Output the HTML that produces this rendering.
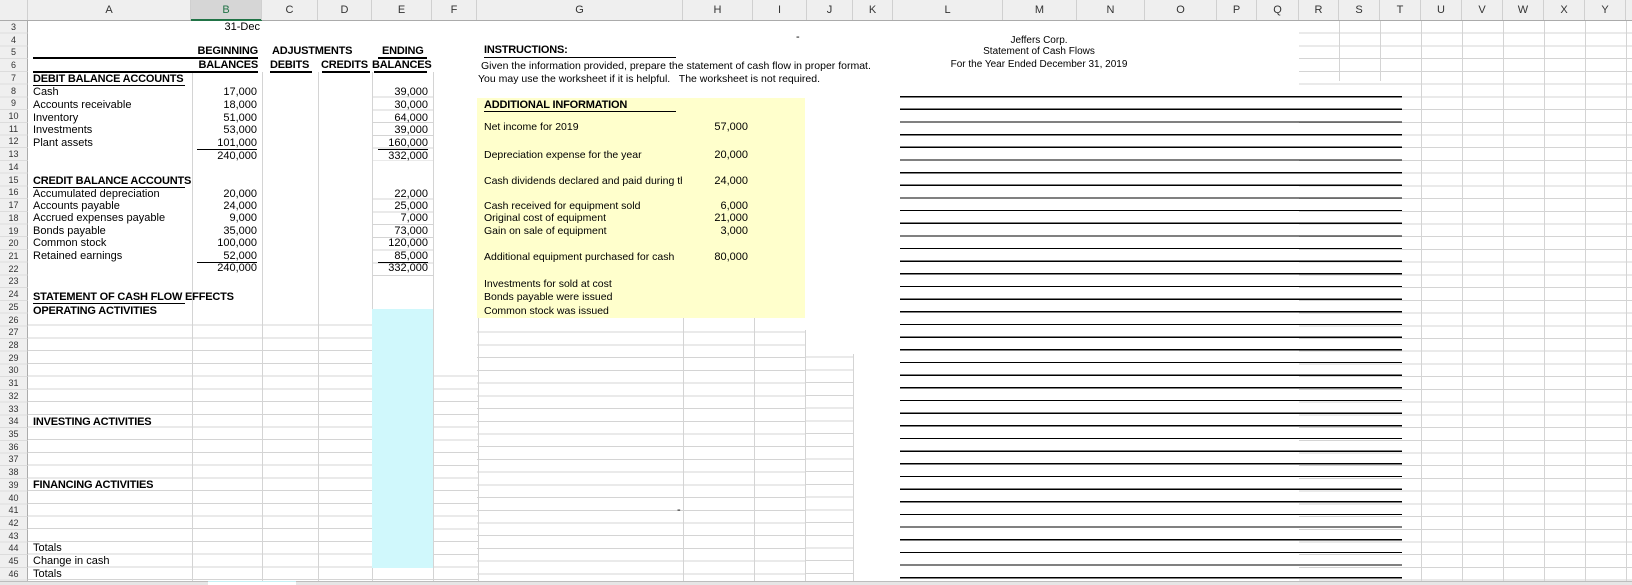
<!DOCTYPE html>
<html><head><meta charset="utf-8"><style>
*{margin:0;padding:0;box-sizing:border-box}
body{width:1632px;height:585px;overflow:hidden;background:#fff;position:relative;font-family:"Liberation Sans",sans-serif;font-size:11px;color:#000}
.a{position:absolute;white-space:nowrap;line-height:12px}
.b{font-weight:bold;font-size:11px;letter-spacing:-0.2px}
.r{text-align:right}
.ul{position:absolute;height:1px;background:#000}
.ch{position:absolute;top:0;height:20px;line-height:20px;text-align:center;font-size:11px;color:#333;border-right:1px solid #d0d0d0}
.vl{position:absolute;width:1px;background:#d4d4d4}
.hg{position:absolute;background-image:repeating-linear-gradient(to bottom,transparent 0,transparent 11.72px,#d4d4d4 11.72px,#d4d4d4 12.72px)}
</style></head><body>
<div style="position:absolute;left:0;top:0;width:1632px;height:21px;background:#efefef;border-bottom:1px solid #ababab"></div>
<div style="position:absolute;left:191px;top:0;width:71px;height:21px;background:#d6d6d6;border-bottom:2px solid #217346"></div>
<div class="ch" style="left:0;width:28px"></div>
<div class="ch" style="left:28px;width:163px">A</div>
<div class="ch" style="left:191px;width:71px;color:#217346">B</div>
<div class="ch" style="left:262px;width:56px">C</div>
<div class="ch" style="left:318px;width:54px">D</div>
<div class="ch" style="left:372px;width:60px">E</div>
<div class="ch" style="left:432px;width:45px">F</div>
<div class="ch" style="left:477px;width:206px">G</div>
<div class="ch" style="left:683px;width:70px">H</div>
<div class="ch" style="left:753px;width:54px">I</div>
<div class="ch" style="left:807px;width:46px">J</div>
<div class="ch" style="left:853px;width:40px">K</div>
<div class="ch" style="left:893px;width:110px">L</div>
<div class="ch" style="left:1003px;width:74px">M</div>
<div class="ch" style="left:1077px;width:68px">N</div>
<div class="ch" style="left:1145px;width:72px">O</div>
<div class="ch" style="left:1217px;width:40px">P</div>
<div class="ch" style="left:1257px;width:42px">Q</div>
<div class="ch" style="left:1299px;width:40px">R</div>
<div class="ch" style="left:1339px;width:41px">S</div>
<div class="ch" style="left:1380px;width:41px">T</div>
<div class="ch" style="left:1421px;width:41px">U</div>
<div class="ch" style="left:1462px;width:41px">V</div>
<div class="ch" style="left:1503px;width:41px">W</div>
<div class="ch" style="left:1544px;width:41px">X</div>
<div class="ch" style="left:1585px;width:41px">Y</div>
<div style="position:absolute;left:0;top:21px;width:28px;height:560px;background:#efefef;border-right:1px solid #ababab;font-size:9px;color:#333;text-align:center">
<div style="line-height:12.72px">3<br>4<br>5<br>6<br>7<br>8<br>9<br>10<br>11<br>12<br>13<br>14<br>15<br>16<br>17<br>18<br>19<br>20<br>21<br>22<br>23<br>24<br>25<br>26<br>27<br>28<br>29<br>30<br>31<br>32<br>33<br>34<br>35<br>36<br>37<br>38<br>39<br>40<br>41<br>42<br>43<br>44<br>45<br>46</div></div>
<div class="hg" style="left:0;top:21px;width:28px;height:560px;opacity:.7"></div>

<div class="hg" style="left:1299px;top:21px;width:333px;height:560px"></div>
<div class="vl" style="left:1339px;top:21px;height:60px"></div>
<div class="vl" style="left:1380px;top:21px;height:60px"></div>
<div class="vl" style="left:1421px;top:21px;height:560px"></div>
<div class="vl" style="left:1462px;top:21px;height:560px"></div>
<div class="vl" style="left:1503px;top:21px;height:560px"></div>
<div class="vl" style="left:1544px;top:21px;height:560px"></div>
<div class="vl" style="left:1585px;top:21px;height:560px"></div>
<div class="vl" style="left:1626px;top:21px;height:560px"></div>

<div class="hg" style="left:28px;top:314px;width:406px;height:267px;background-position:0 -1px"></div>
<div class="hg" style="left:434px;top:364px;width:44px;height:217px"></div>
<div class="hg" style="left:477px;top:320px;width:328px;height:261px"></div>
<div class="hg" style="left:805px;top:345px;width:48px;height:236px"></div>
<div class="vl" style="left:192px;top:72px;height:509px"></div>
<div class="vl" style="left:262px;top:72px;height:509px"></div>
<div class="vl" style="left:318px;top:72px;height:509px"></div>
<div class="vl" style="left:372px;top:72px;height:509px"></div>
<div class="vl" style="left:433px;top:72px;height:509px"></div>
<div class="vl" style="left:478px;top:318px;height:263px"></div>
<div class="vl" style="left:683px;top:318px;height:263px"></div>
<div class="vl" style="left:754px;top:318px;height:263px"></div>
<div class="vl" style="left:805px;top:330px;height:251px"></div>
<div class="vl" style="left:853px;top:354px;height:227px"></div>
<div class="hg" style="left:372px;top:85px;width:61px;height:76px;background-position:0 0"></div>
<div class="hg" style="left:372px;top:187px;width:61px;height:89px"></div>

<div style="position:absolute;left:372px;top:309px;width:61px;height:259px;background:#d0f8fc"></div>
<div style="position:absolute;left:477px;top:98px;width:328px;height:220px;background:#ffffcc"></div>

<div style="position:absolute;left:900px;top:96px;width:502px;height:484px;background-image:repeating-linear-gradient(to bottom,#000 0,#000 1.3px,transparent 1.3px,transparent 12.66px)"></div>

<div class="a r" style="left:192px;width:68px;top:21px">31-Dec</div>
<div class="a b r" style="left:150px;width:108px;top:45px">BEGINNING</div>
<div class="a b" style="left:272px;top:45px">ADJUSTMENTS</div>
<div class="a b" style="left:382px;top:45px">ENDING</div>
<div class="ul" style="left:33px;top:57px;width:225px;height:2px"></div>
<div class="ul" style="left:378px;top:57px;width:49px;height:2px"></div>
<div class="a b r" style="left:150px;width:108px;top:59px">BALANCES</div>
<div class="a b" style="left:270px;top:59px">DEBITS</div>
<div class="a b" style="left:321px;top:59px">CREDITS</div>
<div class="a b" style="left:372px;top:59px">BALANCES</div>
<div class="ul" style="left:33px;top:71px;width:225px;height:2px"></div>
<div class="ul" style="left:270px;top:71px;width:42px;height:2px"></div>
<div class="ul" style="left:322px;top:71px;width:48px;height:2px"></div>
<div class="ul" style="left:374px;top:71px;width:53px;height:2px"></div>
<div class="a b" style="left:33px;top:73px">DEBIT BALANCE ACCOUNTS</div>
<div class="ul" style="left:33px;top:85px;width:152px"></div>

<div class="a" style="left:33px;top:86px">Cash</div>
<div class="a" style="left:33px;top:99px">Accounts receivable</div>
<div class="a" style="left:33px;top:112px">Inventory</div>
<div class="a" style="left:33px;top:124px">Investments</div>
<div class="a" style="left:33px;top:137px">Plant assets</div>
<div class="a r" style="left:192px;width:65px;top:86px">17,000</div>
<div class="a r" style="left:192px;width:65px;top:99px">18,000</div>
<div class="a r" style="left:192px;width:65px;top:112px">51,000</div>
<div class="a r" style="left:192px;width:65px;top:124px">53,000</div>
<div class="a r" style="left:192px;width:65px;top:137px">101,000</div>
<div class="a r" style="left:192px;width:65px;top:150px">240,000</div>
<div class="ul" style="left:197px;top:149px;width:60px"></div>
<div class="a r" style="left:372px;width:56px;top:86px">39,000</div>
<div class="a r" style="left:372px;width:56px;top:99px">30,000</div>
<div class="a r" style="left:372px;width:56px;top:112px">64,000</div>
<div class="a r" style="left:372px;width:56px;top:124px">39,000</div>
<div class="a r" style="left:372px;width:56px;top:137px">160,000</div>
<div class="a r" style="left:372px;width:56px;top:150px">332,000</div>
<div class="ul" style="left:378px;top:149px;width:50px"></div>

<div class="a b" style="left:33px;top:175px">CREDIT BALANCE ACCOUNTS</div>
<div class="ul" style="left:33px;top:187px;width:152px"></div>
<div class="a" style="left:33px;top:188px">Accumulated depreciation</div>
<div class="a" style="left:33px;top:200px">Accounts payable</div>
<div class="a" style="left:33px;top:212px">Accrued expenses payable</div>
<div class="a" style="left:33px;top:225px">Bonds payable</div>
<div class="a" style="left:33px;top:237px">Common stock</div>
<div class="a" style="left:33px;top:250px">Retained earnings</div>
<div class="a r" style="left:192px;width:65px;top:188px">20,000</div>
<div class="a r" style="left:192px;width:65px;top:200px">24,000</div>
<div class="a r" style="left:192px;width:65px;top:212px">9,000</div>
<div class="a r" style="left:192px;width:65px;top:225px">35,000</div>
<div class="a r" style="left:192px;width:65px;top:237px">100,000</div>
<div class="a r" style="left:192px;width:65px;top:250px">52,000</div>
<div class="a r" style="left:192px;width:65px;top:262px">240,000</div>
<div class="ul" style="left:197px;top:262px;width:60px"></div>
<div class="a r" style="left:372px;width:56px;top:188px">22,000</div>
<div class="a r" style="left:372px;width:56px;top:200px">25,000</div>
<div class="a r" style="left:372px;width:56px;top:212px">7,000</div>
<div class="a r" style="left:372px;width:56px;top:225px">73,000</div>
<div class="a r" style="left:372px;width:56px;top:237px">120,000</div>
<div class="a r" style="left:372px;width:56px;top:250px">85,000</div>
<div class="a r" style="left:372px;width:56px;top:262px">332,000</div>
<div class="ul" style="left:378px;top:262px;width:50px"></div>

<div class="a b" style="left:33px;top:291px">STATEMENT OF CASH FLOW EFFECTS</div>
<div class="ul" style="left:33px;top:303px;width:152px"></div>
<div class="a b" style="left:33px;top:305px">OPERATING ACTIVITIES</div>
<div class="a b" style="left:33px;top:416px">INVESTING ACTIVITIES</div>
<div class="a b" style="left:33px;top:479px">FINANCING ACTIVITIES</div>
<div class="a" style="left:33px;top:542px">Totals</div>
<div class="a" style="left:33px;top:555px">Change in cash</div>
<div class="a" style="left:33px;top:568px">Totals</div>
<div class="a" style="left:677px;top:504px">-</div>

<div class="a" style="left:796px;top:31px">-</div>
<div class="a b" style="left:484px;top:44px">INSTRUCTIONS:</div>
<div class="ul" style="left:484px;top:57px;width:192px"></div>
<div class="a" style="left:481px;top:60px;font-size:10.5px">Given the information provided, prepare the statement of cash flow in proper format.</div>
<div class="a" style="left:478px;top:73px;font-size:10.5px">You may use the worksheet if it is helpful.&nbsp;&nbsp; The worksheet is not required.</div>
<div class="a b" style="left:484px;top:99px">ADDITIONAL INFORMATION</div>
<div class="ul" style="left:484px;top:111px;width:192px"></div>
<div class="a" style="left:484px;top:121px;font-size:10.5px">Net income for 2019</div>
<div class="a" style="left:484px;top:149px;font-size:10.5px">Depreciation expense for the year</div>
<div class="a" style="left:484px;top:175px;font-size:10.5px;width:198px;overflow:hidden">Cash dividends declared and paid during the</div>
<div class="a" style="left:484px;top:200px;font-size:10.5px">Cash received for equipment sold</div>
<div class="a" style="left:484px;top:212px;font-size:10.5px">Original cost of equipment</div>
<div class="a" style="left:484px;top:225px;font-size:10.5px">Gain on sale of equipment</div>
<div class="a" style="left:484px;top:251px;font-size:10.5px">Additional equipment purchased for cash</div>
<div class="a" style="left:484px;top:278px;font-size:10.5px">Investments for sold at cost</div>
<div class="a" style="left:484px;top:291px;font-size:10.5px">Bonds payable were issued</div>
<div class="a" style="left:484px;top:305px;font-size:10.5px">Common stock was issued</div>
<div class="a r" style="left:690px;width:58px;top:121px">57,000</div>
<div class="a r" style="left:690px;width:58px;top:149px">20,000</div>
<div class="a r" style="left:690px;width:58px;top:175px">24,000</div>
<div class="a r" style="left:690px;width:58px;top:200px">6,000</div>
<div class="a r" style="left:690px;width:58px;top:212px">21,000</div>
<div class="a r" style="left:690px;width:58px;top:225px">3,000</div>
<div class="a r" style="left:690px;width:58px;top:251px">80,000</div>

<div class="a" style="left:939px;width:200px;text-align:center;top:35px;font-size:10px">Jeffers Corp.</div>
<div class="a" style="left:939px;width:200px;text-align:center;top:46px;font-size:10px">Statement of Cash Flows</div>
<div class="a" style="left:939px;width:200px;text-align:center;top:59px;font-size:10px">For the Year Ended December 31, 2019</div>

<div style="position:absolute;left:0;top:581px;width:1632px;height:4px;background:#e6e6e6;border-top:1px solid #bdbdbd"></div>
<div style="position:absolute;left:208px;top:581px;width:88px;height:4px;background:#fff;border-top:1px solid #c8f0f4"></div>
</body></html>
